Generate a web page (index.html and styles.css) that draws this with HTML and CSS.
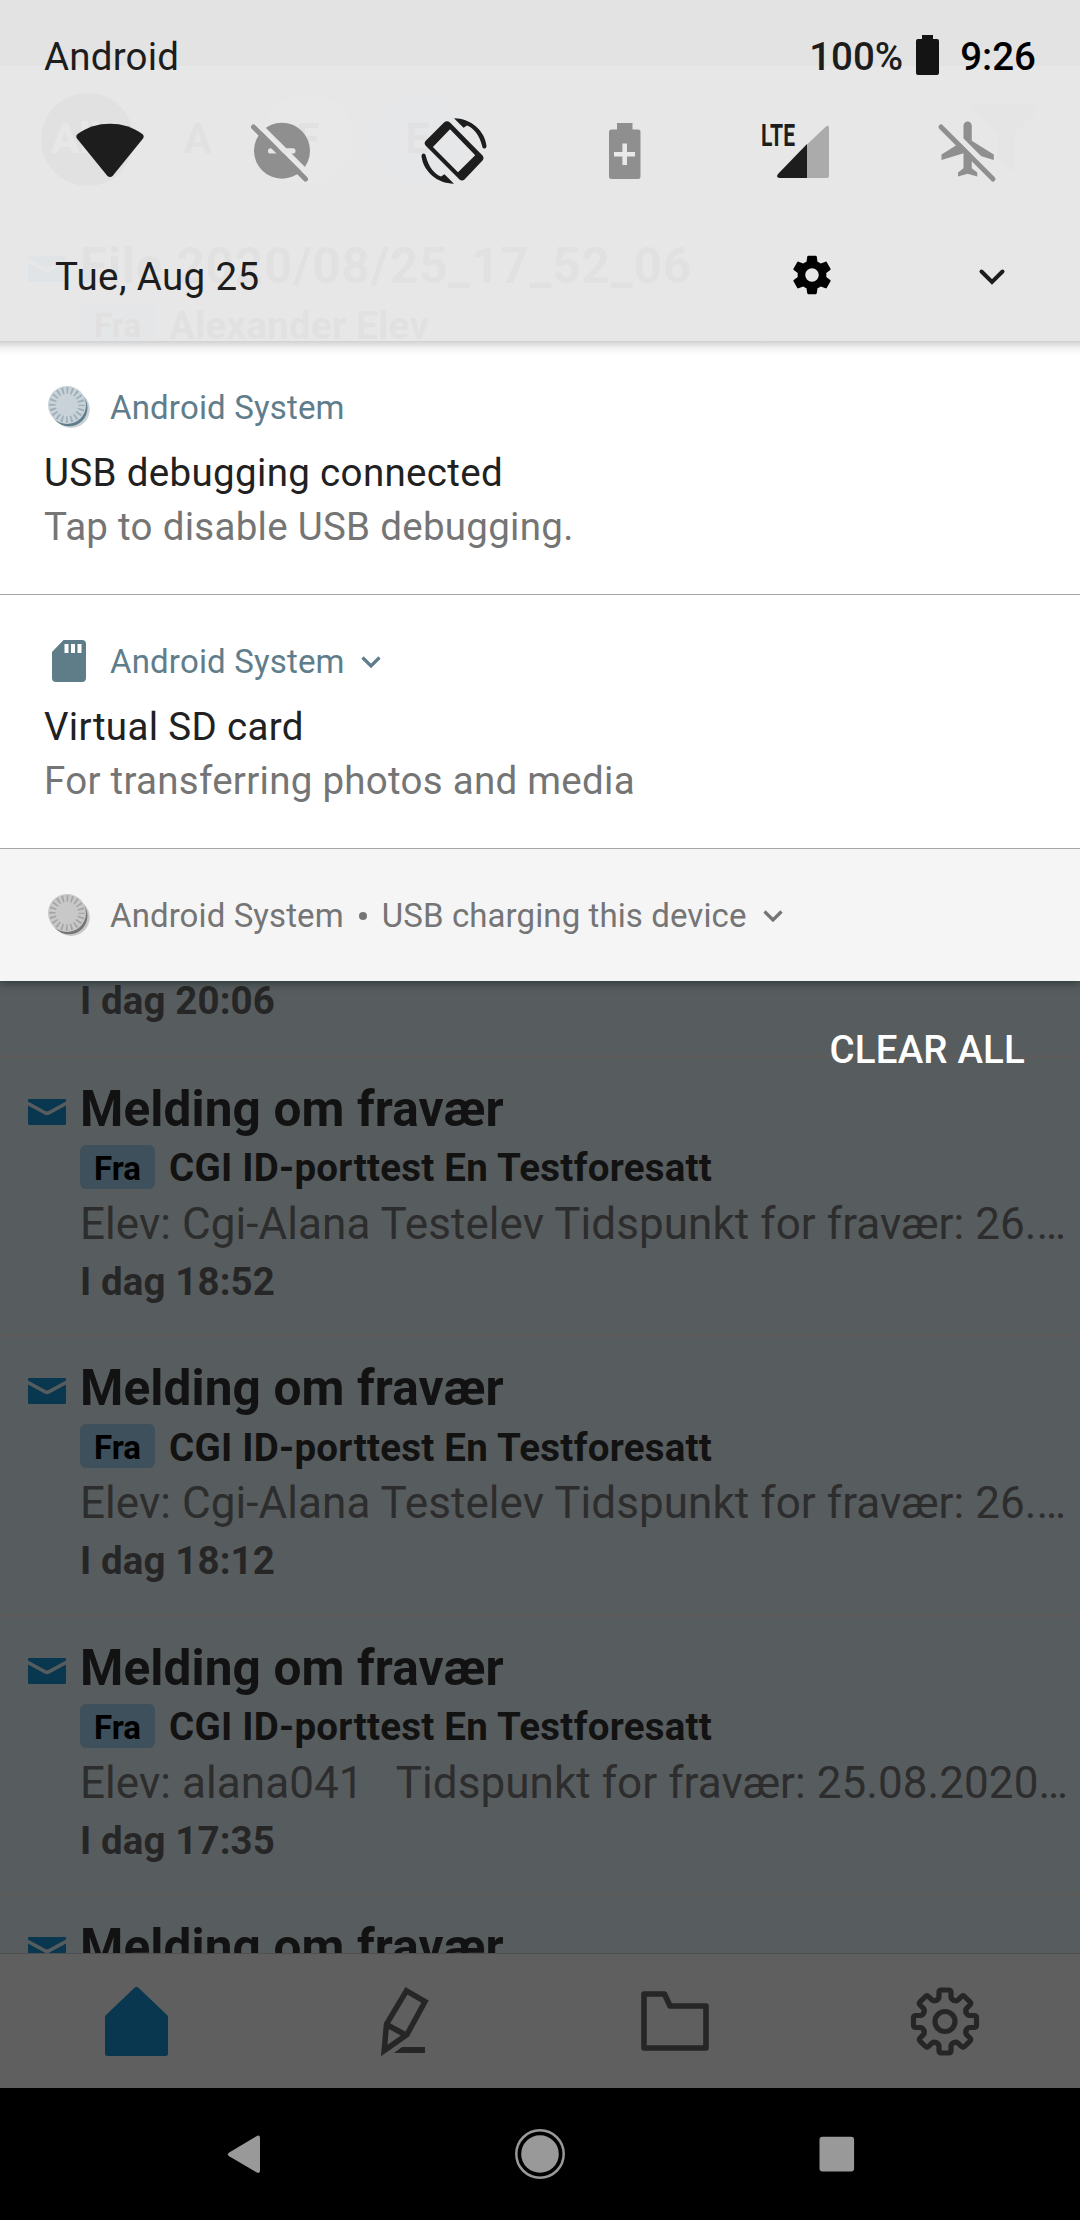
FILE: index.html
```html
<!DOCTYPE html>
<html lang="no">
<head>
<meta charset="utf-8">
<title>Notifications</title>
<link rel="stylesheet" href="styles.css">
</head>
<body>
<svg class="defs" width="0" height="0">
  <defs>
    <symbol id="mail" viewBox="0 0 38 26"><path d="M0 1Q0 0 1 0H37Q38 0 38 1V2.500L21 11.800Q19 12.900 17 11.800L0 2.500Z"/><path d="M0 6.500L16.500 15.600Q19 17 21.500 15.600L38 6.500V24.500Q38 26 36.500 26H1.500Q0 26 0 24.500Z"/></symbol>
    <symbol id="chevron" viewBox="0 0 20 12"><path d="M1.500 1.500L10 10L18.500 1.500" fill="none" stroke="currentColor" stroke-width="3.200"/></symbol>
    <symbol id="system" viewBox="0 0 42 42"><circle cx="23.300" cy="23.500" r="18.500" fill="currentColor" opacity=".35"/><circle cx="21" cy="21.800" r="18.500" fill="currentColor"/><circle class="disc" cx="19" cy="19" r="19"/><circle cx="19" cy="19" r="14.500" fill="none" stroke="currentColor" stroke-width="6.500" stroke-dasharray="1.700 2.855" stroke-dashoffset=".85" opacity=".42"/></symbol>
    <path id="tooth" d="M-8.800-21.200C-7.500-21.800-6-22.300-6-24.500V-29Q-6-31.500-3.500-31.500H3.500Q6-31.500 6-29V-24.500C6-22.300 7.500-21.800 8.800-21.200"/>
    <mask id="slash-gap"><path d="M-10-10H76V76H-10Z" fill="#fff"/><path d="M-5-8L75 72" stroke="#000" stroke-width="5.600"/></mask>
  </defs>
</svg>
<div class="screen">
  <div class="app">
    <div class="app-status"></div>
    <div class="app-bar">
      <span class="avatar all">Alle</span><span class="avatar a">A</span><span class="avatar f">F</span><span class="avatar e">E</span>
      <svg class="filter" width="66" height="68" viewBox="0 0 66 68"><path d="M0 0H66V5L42 28V68L24 53V28L0 5Z"/></svg>
    </div>
    <main class="list">
      <article class="item first"><svg class="mail"><use href="#mail"/></svg><div class="body"><h2>File 2020/08/25_17_52_06</h2><div class="from"><span class="tag">Fra</span><b>Alexander Elev</b></div></div></article>
      <article class="item"></article>
      <article class="item last-hidden"><div class="body"><time>I dag 20:06</time></div></article>
      <article class="item"><svg class="mail"><use href="#mail"/></svg><div class="body"><h2>Melding om fravær</h2><div class="from"><span class="tag">Fra</span><b>CGI ID-porttest En Testforesatt</b></div><p>Elev: Cgi-Alana Testelev Tidspunkt for fravær: 26.…</p><time>I dag 18:52</time></div></article>
      <article class="item"><svg class="mail"><use href="#mail"/></svg><div class="body"><h2>Melding om fravær</h2><div class="from"><span class="tag">Fra</span><b>CGI ID-porttest En Testforesatt</b></div><p>Elev: Cgi-Alana Testelev Tidspunkt for fravær: 26.…</p><time>I dag 18:12</time></div></article>
      <article class="item"><svg class="mail"><use href="#mail"/></svg><div class="body"><h2>Melding om fravær</h2><div class="from"><span class="tag">Fra</span><b>CGI ID-porttest En Testforesatt</b></div><p>Elev: alana041 &nbsp; Tidspunkt for fravær: 25.08.2020…</p><time>I dag 17:35</time></div></article>
      <article class="item"><svg class="mail"><use href="#mail"/></svg><div class="body"><h2>Melding om fravær</h2></div></article>
    </main>
    <nav class="tabs">
      <svg class="home" width="63" height="69" viewBox="0 0 63 69"><path d="M29 1.200Q31.500-1 34 1.200L62 28Q63 29 63 30.500V66.500Q63 69 60.500 69H2.500Q0 69 0 66.500V30.500Q0 29 1 28Z"/></svg>
      <svg class="pencil" width="48" height="69" viewBox="0 0 48 69"><g fill="none" stroke="currentColor" stroke-width="5.500"><path d="M25.500 3.800L44 14.500L26 47.500L3.200 63.500L5.500 37Z"/><path d="M5.500 37.500L25.500 48.500"/></g><path d="M13 66L21 60H44V66Z" fill="currentColor"/></svg>
      <svg width="68" height="60" viewBox="0 0 68 60"><path d="M3 3H23.500L29 15H65V57H3Z" fill="none" stroke="currentColor" stroke-width="5.600" stroke-linejoin="round"/></svg>
      <svg width="68" height="69" viewBox="-34 -34.500 68 69"><g fill="none" stroke="currentColor" stroke-width="5.200" stroke-linecap="round"><circle r="10"/><use href="#tooth"/><use href="#tooth" transform="rotate(45)"/><use href="#tooth" transform="rotate(90)"/><use href="#tooth" transform="rotate(135)"/><use href="#tooth" transform="rotate(180)"/><use href="#tooth" transform="rotate(225)"/><use href="#tooth" transform="rotate(270)"/><use href="#tooth" transform="rotate(315)"/></g></svg>
    </nav>
    <nav class="system-nav">
      <svg width="52" height="52" viewBox="0 0 52 52"><path d="M12.200 24.400L39.800 8Q43 6.600 43 10V42.500Q43 46 39.800 44.500L12.200 28.200Q9.500 26.300 12.200 24.400Z"/></svg>
      <svg width="52" height="52" viewBox="0 0 52 52"><circle cx="26" cy="26" r="18.800"/><circle cx="26" cy="26" r="23.700" fill="none" stroke="#999" stroke-width="2.500"/></svg>
      <svg width="52" height="52" viewBox="0 0 52 52"><rect x="8.500" y="8.800" width="34.600" height="34.600" rx="3"/></svg>
    </nav>
  </div>
  <div class="shade">
    <header class="quick">
      <div class="status"><span>Android</span><span class="pct">100%</span><svg width="23" height="40" viewBox="0 0 23 40"><path d="M6 0H17V4H21Q23 4 23 6V38Q23 40 21 40H2Q0 40 0 38V6Q0 4 2 4H6Z"/></svg><b>9:26</b></div>
      <div class="tiles">
        <svg viewBox="0 0 66 66"><path d="M1 15.800C10 9 21 5.700 33 5.700S56 9 65 15.800Q67.800 18 66 20.500L36 57.500Q33 60.700 30 57.500L0 20.500Q-1.800 18 1 15.800Z"/></svg>
        <svg viewBox="0 0 66 66" class="off"><g mask="url(#slash-gap)"><circle cx="33" cy="32.700" r="28"/></g><rect x="19" y="30.300" width="27.500" height="5.200" rx="2.600" fill="#e6e6e6"/><path d="M4.500 9L56.500 61" class="slash"/></svg>
        <svg viewBox="0 0 66 66"><path fill-rule="evenodd" d="M23 4.500Q26 2.200 29 4.500L61.500 37.500Q63.500 40 61.500 42.500L43.500 61.500Q41 63.500 38.500 61.500L5 28Q2.500 25.500 4.500 23ZM29 11.300L11.900 29L37 54.300L54.200 37.300Z"/><g id="turn"><path d="M33 .3C50 .3 64 13 65.500 28Q65.400 31 63 30.500Q61.200 30.200 61 27.500C58.500 17 52 9.500 46 7.500L42.500 9.800Z"/></g><use href="#turn" transform="rotate(180 33 33)"/></svg>
        <svg viewBox="0 0 66 66" class="off"><path d="M25 5H40.500V11.500H46Q48.500 11.500 48.500 14V58.500Q48.500 61 46 61H19.500Q17 61 17 58.500V14Q17 11.500 19.500 11.500H25Z"/><path d="M22 36.300H43M32.700 25.500V47" stroke="#e9e9e9" stroke-width="4.600"/></svg>
        <svg viewBox="0 0 66 66"><path d="M62 8.500Q65 6.500 65 10V58Q65 60 63 60H43V26.500Z" fill="#ababab"/><path d="M43 26V60H15.500Q11.500 59.500 14 56Z"/><text x="-3" y="28" textLength="34" lengthAdjust="spacingAndGlyphs">LTE</text></svg>
        <svg viewBox="0 0 66 66" class="off"><g mask="url(#slash-gap)"><path transform="translate(0 -2) scale(2.750)" d="M21 16v-2l-8-5V3.500c0-.83-.67-1.500-1.500-1.500S10 2.670 10 3.500V9l-8 5v2l8-2.500V19l-2 1.500V22l3.500-1 3.500 1v-1.500L13 19v-5.500l8 2.500z"/></g><path d="M5 9L57 61" class="slash"/></svg>
      </div>
      <div class="date"><span>Tue, Aug 25</span><svg class="gear" width="46" height="46" viewBox="0 0 24 24"><path d="M19.430 12.980c.04-.32.07-.64.07-.98s-.03-.66-.07-.98l2.110-1.650c.19-.15.24-.42.12-.64l-2-3.460c-.12-.22-.39-.3-.61-.22l-2.490 1c-.52-.4-1.080-.73-1.690-.98l-.38-2.650C14.460 2.180 14.250 2 14 2h-4c-.25 0-.46.18-.49.42l-.38 2.650c-.61.25-1.170.59-1.690.98l-2.490-1c-.23-.09-.49 0-.61.22l-2 3.460c-.13.22-.07.49.12.64l2.110 1.650c-.04.32-.07.65-.07.98s.03.66.07.98l-2.110 1.650c-.19.15-.24.42-.12.64l2 3.460c.12.22.39.3.61.22l2.490-1c.52.4 1.080.73 1.690.98l.38 2.650c.03.24.24.42.49.42h4c.25 0 .46-.18.49-.42l.38-2.650c.61-.25 1.170-.59 1.690-.98l2.490 1c.23.09.49 0 .61-.22l2-3.460c.12-.22.07-.49-.12-.64l-2.110-1.650zM12 15.500c-1.930 0-3.500-1.570-3.500-3.500s1.570-3.500 3.500-3.500 3.500 1.570 3.500 3.500-1.570 3.500-3.500 3.500z"/></svg><svg width="26" height="16" viewBox="0 0 26 16"><path d="M2.500 2.500L13 13L23.500 2.500" fill="none" stroke="#1d1d1d" stroke-width="4" stroke-linecap="round"/></svg></div>
    </header>
    <section class="note"><div class="head"><svg class="icon"><use href="#system"/></svg>Android System</div><h3>USB debugging connected</h3><p>Tap to disable USB debugging.</p></section>
    <section class="note"><div class="head"><svg class="icon" viewBox="0 0 42 42"><path fill-rule="evenodd" d="M15.500 0H34Q38 0 38 4V38Q38 42 34 42H8Q4 42 4 38V12ZM16.500 4V13H20.500V4ZM23 4V13H27V4ZM29.500 4V13H33.500V4Z"/></svg>Android System<svg class="more"><use href="#chevron"/></svg></div><h3>Virtual SD card</h3><p>For transferring photos and media</p></section>
    <section class="note quiet"><div class="head"><svg class="icon"><use href="#system"/></svg>Android System<i></i>USB charging this device<svg class="more"><use href="#chevron"/></svg></div></section>
    <button class="clear">CLEAR ALL</button>
  </div>
</div>
</body>
</html>
```

FILE: styles.css
```css
* { box-sizing: border-box; margin: 0; padding: 0; }
body { background: #000; font-family: Roboto, "Liberation Sans", sans-serif; font-size: 38.5px; line-height: 46px; }
svg { display: block; flex: none; overflow: visible; }
.defs { position: absolute; }
.screen { position: relative; width: 1080px; height: 2220px; overflow: hidden; }

/* App behind the shade */
.app { display: flex; flex-direction: column; height: 2220px; background: #575c5e; }
.app-status { height: 66px; flex: none; background: #2d2d2d; }
.app-bar { height: 149px; flex: none; display: flex; align-items: center; padding: 0 41px 3px; gap: 17px; background: #5f5f5f; }
.avatar { width: 93px; height: 93px; border-radius: 50%; display: flex; align-items: center; justify-content: center; font-size: 42px; font-weight: 700; color: #101010; }
.avatar.all { background: #161616; color: #606060; }
.avatar.a { background: #605b5b; }
.avatar.f { background: #586260; }
.avatar.e { background: #4a6067; }
.filter { margin-left: auto; fill: #484848; }
.list { flex: 1; min-height: 0; overflow: hidden; }
.item { height: 279.4px; display: flex; padding: 21px 8px 0 28px; border-bottom: 3px solid #5c5b5a; }
.item.first { height: 284.2px; }
.item.first h2 { letter-spacing: .8px; }
.item.last-hidden { align-items: flex-end; padding-left: 80px; padding-bottom: 31px; }
.mail { width: 38px; height: 26px; margin: 20px 14px 0 0; fill: #08374f; }
.body { min-width: 0; white-space: nowrap; }
.body h2 { font-size: 49.5px; line-height: 60px; font-weight: 700; letter-spacing: .12px; color: #121212; }
.from { display: flex; align-items: center; height: 44px; margin-top: 6px; gap: 14px; }
.from b { padding-top: 3px; letter-spacing: .25px; color: #121212; }
.tag { width: 75px; height: 44px; border-radius: 6px; background: #3e505b; color: #000; font-size: 33px; font-weight: 700; line-height: 47px; text-align: center; }
.body p { margin-top: 8px; font-size: 44px; line-height: 54px; letter-spacing: .07px; color: #2d2d2d; }
.body time { display: block; margin-top: 8px; font-weight: 700; letter-spacing: .1px; color: #262626; }
.tabs { height: 135px; flex: none; display: grid; grid-template-columns: repeat(4, 1fr); place-items: center; background: #5f5f5f; border-top: 1px solid #4e4f50; color: #262626; }
.tabs .home { fill: #08374f; margin-left: 3px; }
.system-nav { height: 132px; flex: none; display: flex; justify-content: center; align-items: center; gap: 245px; background: #000; fill: #999; }

/* Notification shade */
.shade { position: absolute; inset: 0 0 auto; display: flex; flex-direction: column; }
.quick { position: relative; height: 341px; padding-top: 34px; background: rgba(243, 243, 243, .92); color: #1d1d1d; fill: #1d1d1d; }
.quick::after { content: ""; position: absolute; left: 0; right: 0; top: 341px; height: 14px; background: linear-gradient(rgba(0, 0, 0, .18), rgba(0, 0, 0, .05) 50%, transparent); }
.status { display: flex; height: 46px; padding: 0 44px; letter-spacing: .2px; }
.status .pct { margin-left: auto; margin-right: 13px; font-weight: 500; letter-spacing: 0; }
.status svg { margin: 1px 21px 0 0; fill: #141414; }
.status b { font-weight: 500; letter-spacing: 0; color: #000; }
.tiles { display: grid; grid-template-columns: repeat(6, 1fr); justify-items: center; height: 66px; margin: 38px 25px 0 24px; }
.tiles svg { width: 66px; height: 66px; }
.tiles .off { fill: #8f8f8f; }
.slash { stroke: #8f8f8f; stroke-width: 5; stroke-linecap: round; }
.tiles text { font-size: 31px; font-weight: 700; }
.date { display: flex; align-items: center; height: 46px; margin-top: 70px; padding: 0 75px 0 55px; letter-spacing: .35px; }
.date .gear { margin: -4px 144px 0 auto; fill: #000; }
.note { --disc: #c8d2d8; height: 254px; padding: 38px 44px 0; background: #fff; border-bottom: 1px solid #a6a6a6; color: #757575; }
.head { display: flex; align-items: center; height: 57px; font-size: 33px; letter-spacing: .17px; color: #607d8b; fill: #5f7d88; }
.icon { width: 42px; height: 42px; margin: -1px 20px 0 4px; }
.disc { fill: var(--disc); }
.more { width: 20px; height: 12px; margin: 1px 0 0 16px; }
.note h3 { margin-top: 14px; font-size: 38.5px; font-weight: 400; letter-spacing: .34px; color: #212121; }
.note p { margin-top: 8px; letter-spacing: .28px; }
.quiet { --disc: #c8c8c8; height: 132px; background: #f5f5f5; border: 0; box-shadow: 0 2px 8px rgba(0, 20, 20, .5); clip-path: inset(0 0 -14px); }
.quiet .head { letter-spacing: .1px; color: #757575; }
.head i { width: 8px; height: 8px; margin: 0 15px; border-radius: 50%; background: #757575; }
.clear { align-self: flex-end; margin: 46px 55px 0 0; border: 0; background: none; color: #fff; font: 500 38.5px/46px Roboto, sans-serif; letter-spacing: .15px; }
```
